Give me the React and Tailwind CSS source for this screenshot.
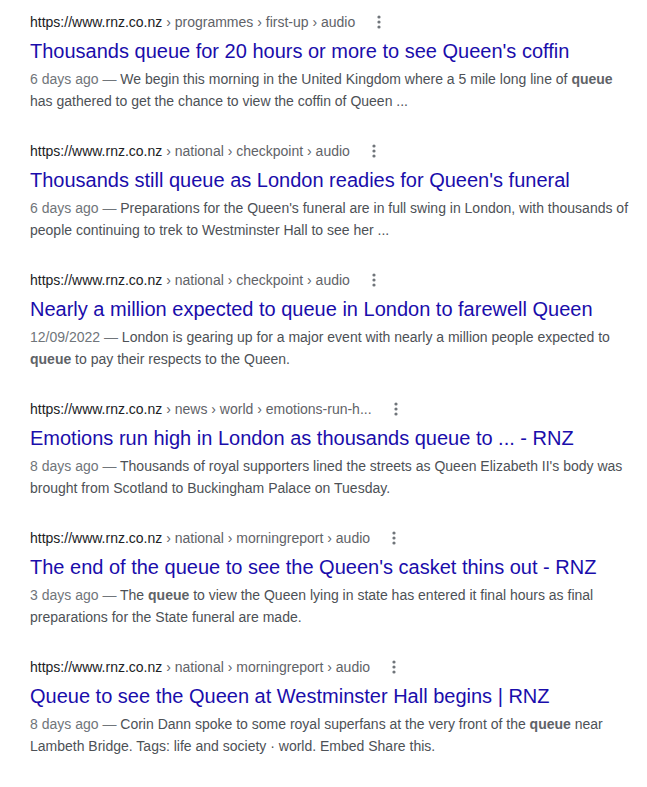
import React from 'react';

const results = [
  {
    path: 'programmes › first-up › audio',
    title: "Thousands queue for 20 hours or more to see Queen's coffin",
    date: '6 days ago',
    snippet: [
      'We begin this morning in the United Kingdom where a 5 mile long line of ',
      { b: 'queue' },
      ' has gathered to get the chance to view the coffin of Queen ...',
    ],
  },
  {
    path: 'national › checkpoint › audio',
    title: "Thousands still queue as London readies for Queen's funeral",
    date: '6 days ago',
    snippet: [
      "Preparations for the Queen's funeral are in full swing in London, with thousands of people continuing to trek to Westminster Hall to see her ...",
    ],
  },
  {
    path: 'national › checkpoint › audio',
    title: 'Nearly a million expected to queue in London to farewell Queen',
    date: '12/09/2022',
    snippet: [
      'London is gearing up for a major event with nearly a million people expected to ',
      { b: 'queue' },
      ' to pay their respects to the Queen.',
    ],
  },
  {
    path: 'news › world › emotions-run-h...',
    title: 'Emotions run high in London as thousands queue to ... - RNZ',
    date: '8 days ago',
    snippet: [
      "Thousands of royal supporters lined the streets as Queen Elizabeth II's body was brought from Scotland to Buckingham Palace on Tuesday.",
    ],
  },
  {
    path: 'national › morningreport › audio',
    title: "The end of the queue to see the Queen's casket thins out - RNZ",
    date: '3 days ago',
    snippet: [
      'The ',
      { b: 'queue' },
      ' to view the Queen lying in state has entered it final hours as final preparations for the State funeral are made.',
    ],
  },
  {
    path: 'national › morningreport › audio',
    title: 'Queue to see the Queen at Westminster Hall begins | RNZ',
    date: '8 days ago',
    snippet: [
      'Corin Dann spoke to some royal superfans at the very front of the ',
      { b: 'queue' },
      ' near Lambeth Bridge. Tags: life and society · world. Embed Share this.',
    ],
  },
];

const Dots = () => (
  <span className="ml-[18px] inline-flex w-3 justify-center">
    <svg width="4" height="14" viewBox="0 0 4 14" fill="#70757a">
      <circle cx="2" cy="2" r="1.6" />
      <circle cx="2" cy="7" r="1.6" />
      <circle cx="2" cy="12" r="1.6" />
    </svg>
  </span>
);

export default function App() {
  return (
    <div className="min-h-screen bg-white pl-[30px] pt-[12px] font-['Liberation_Sans',Arial,sans-serif]">
      <div className="flex w-[600px] flex-col gap-[29px]">
        {results.map((r, i) => (
          <div key={i}>
            <div className="flex h-5 items-center text-[14px] leading-5">
              <span className="text-[#202124]">https://www.rnz.co.nz</span>
              <span className="text-[#5f6368]">&nbsp;› {r.path}</span>
              <Dots />
            </div>
            <div className="mt-[6px] text-[20px] leading-[26px] text-[#1a0dab]">{r.title}</div>
            <p className="mt-1 text-[14px] leading-[22px] text-[#4d5156]">
              <span className="text-[#70757a]">{r.date} — </span>
              {r.snippet.map((s, j) =>
                typeof s === 'string' ? (
                  s
                ) : (
                  <b key={j} className="font-bold text-[#5f6368]">{s.b}</b>
                )
              )}
            </p>
          </div>
        ))}
      </div>
    </div>
  );
}
